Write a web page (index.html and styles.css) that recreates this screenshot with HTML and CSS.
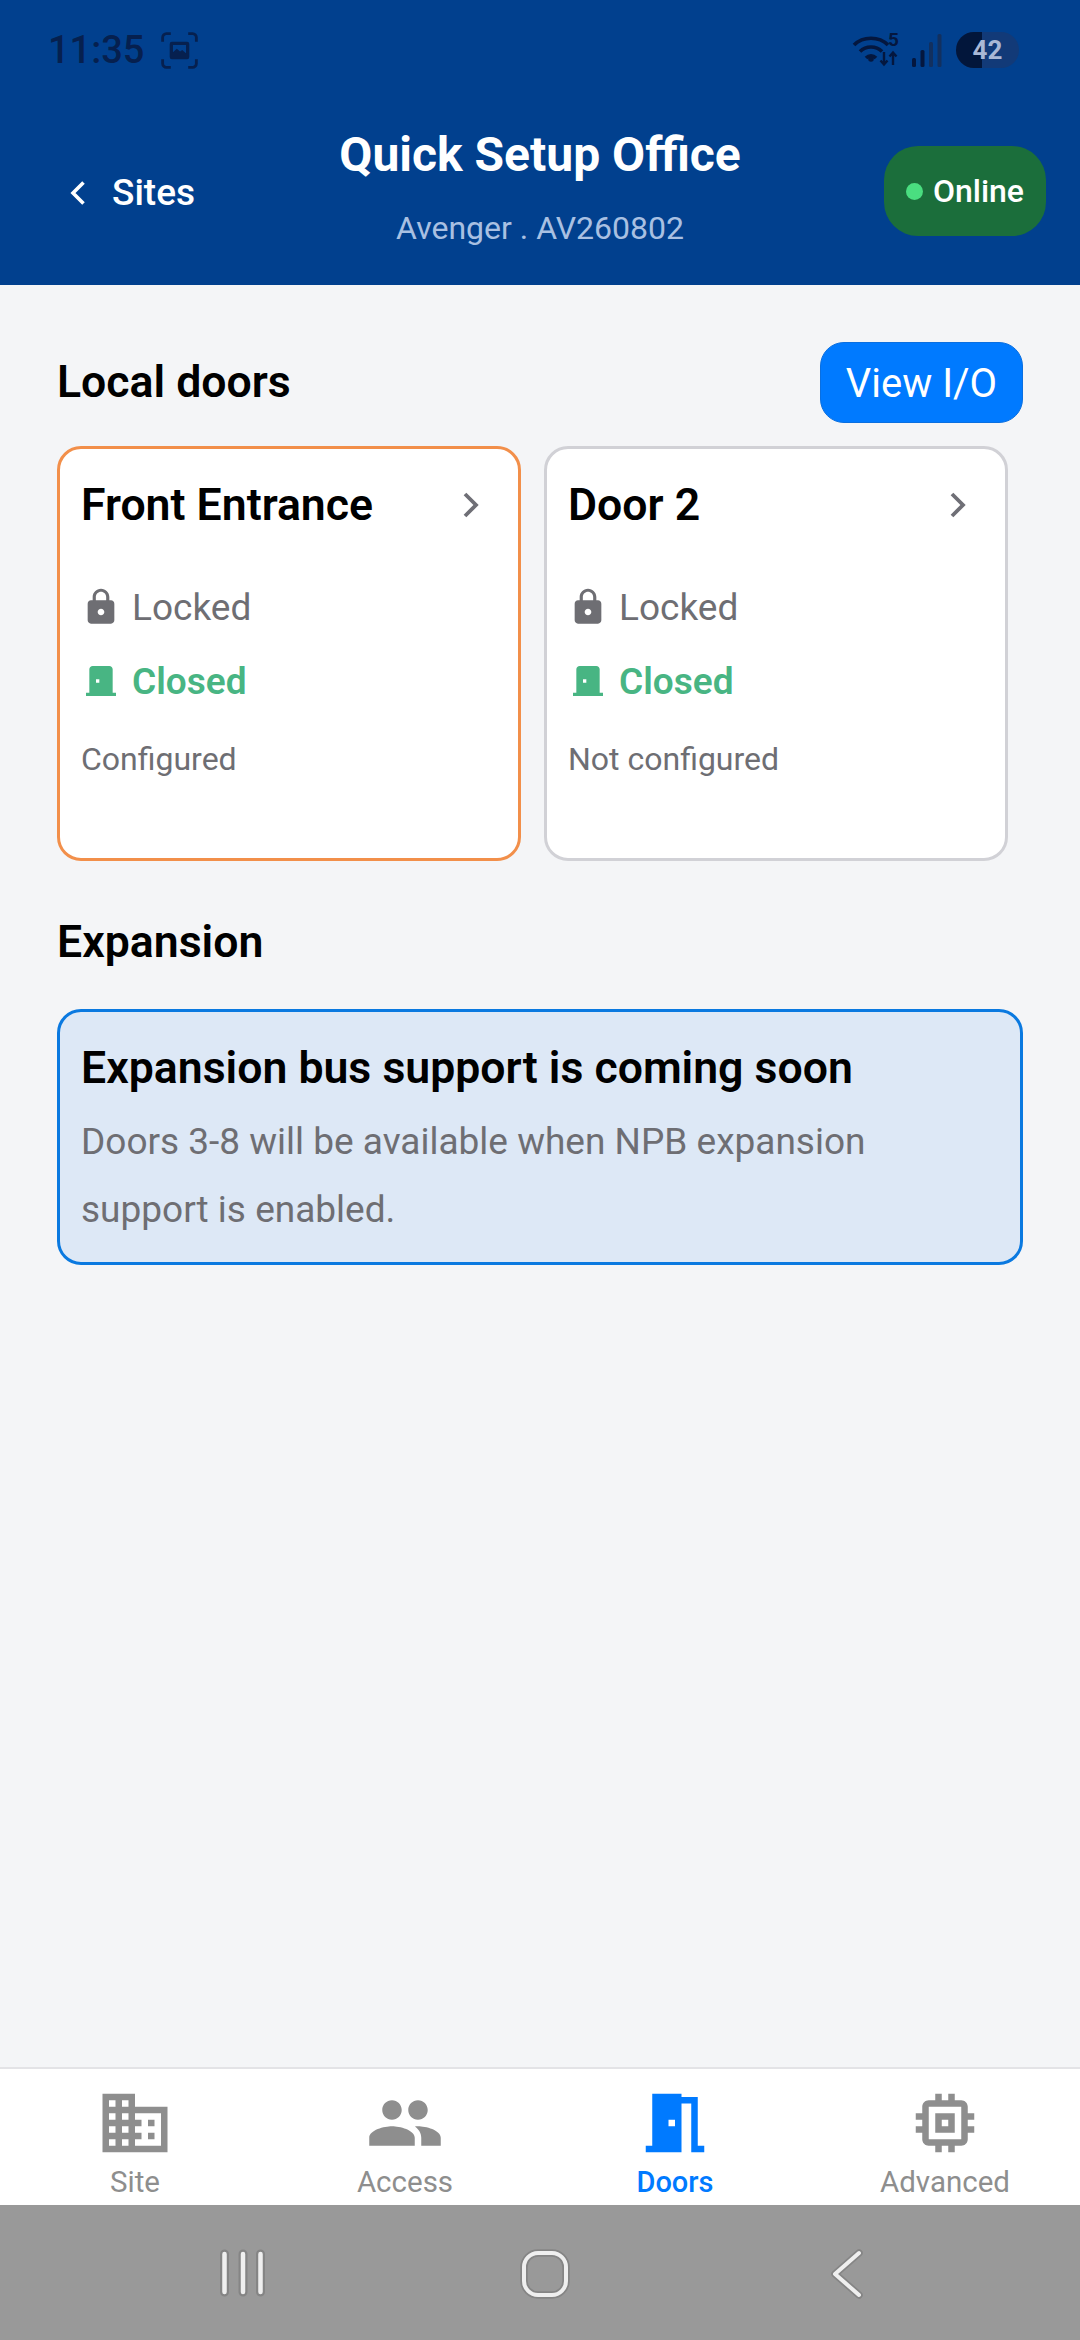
FILE: index.html
```html
<!DOCTYPE html>
<html lang="en">
<head>
    <meta charset="UTF-8">
    <meta name="viewport" content="width=device-width, initial-scale=1.0">
    <title>Quick Setup Office</title>
    <link rel="stylesheet" href="styles.css">
</head>
<body>
<div class="app">

    <!-- Header -->
    <header class="header">
        <div class="status-bar">
            <div class="status-left">
                <span class="clock">11:35</span>
                <svg class="shot-icon" viewBox="0 0 34 34">
                    <path d="M1.5 9V5a3.5 3.5 0 0 1 3.5-3.500h4M25 1.500h4a3.500 3.500 0 0 1 3.500 3.500v4M32.500 25v4a3.500 3.500 0 0 1-3.500 3.500h-4M9 32.500H5A3.500 3.500 0 0 1 1.500 29v-4" fill="none" stroke="#06204f" stroke-width="2.600"/>
                    <path fill-rule="evenodd" d="M10 9h14a2 2 0 0 1 2 2v12a2 2 0 0 1-2 2H10a2 2 0 0 1-2-2V11a2 2 0 0 1 2-2zm1 9.500 3.500-3 3 2.500 2-1.500 3.500 3V12H11z" fill="#06204f"/>
                </svg>
            </div>
            <div class="status-right">
                <svg class="wifi-icon" viewBox="0 -6 48 42">
                    <path d="M2 13C11 4 27 4 36 13M8 19.500c6-6 16-6 22 0M14 26c3-3 7-3 10 0" fill="none" stroke="#04173f" stroke-width="3.600"/>
                    <circle cx="19" cy="27" r="2.800" fill="#04173f"/>
                    <text x="36" y="14" class="wifi-five">5</text>
                    <path d="M32 20v12m-3.500-3.500 3.500 4 3.500-4M41 33V21m-3.500 3.500 3.500-4 3.500 4" fill="none" stroke="#04173f" stroke-width="2.400"/>
                </svg>
                <svg class="signal-icon" viewBox="0 0 30 34">
                    <rect x="0" y="25" width="4" height="9" rx="1.500" fill="#04173f"/>
                    <rect x="8.500" y="17" width="4" height="17" rx="1.500" fill="#04173f"/>
                    <rect x="17" y="9" width="4" height="25" rx="1.500" fill="#12305f"/>
                    <rect x="25.500" y="1" width="4" height="33" rx="1.500" fill="#12305f"/>
                </svg>
                <div class="battery"><span class="battery-fill"></span><span class="battery-text">42</span></div>
            </div>
        </div>
        <div class="header-row">
            <div class="back">
                <svg class="back-icon" viewBox="0 0 16 26"><path d="M13.500 2.500 3 13l10.500 10.500" fill="none" stroke="#fff" stroke-width="3.600"/></svg>
                <span>Sites</span>
            </div>
            <div class="header-title">
                <h1>Quick Setup Office</h1>
                <p>Avenger . AV260802</p>
            </div>
            <div class="online-pill"><span class="online-dot"></span>Online</div>
        </div>
    </header>

    <!-- Main content -->
    <main class="content">
        <div class="section-head">
            <h2>Local doors</h2>
            <button class="io-btn">View I/O</button>
        </div>
        <div class="door-row">
            <div class="door-card door-card-active">
                <div class="door-title">
                    <h3>Front Entrance</h3>
                    <svg class="chev" viewBox="0 0 18 28"><path d="M3 3l11 11L3 25" fill="none" stroke="#6f6f76" stroke-width="3.800"/></svg>
                </div>
                <div class="door-status">
                    <svg class="status-icon" viewBox="0 0 24 24"><path fill="#6e6e73" d="M18 8h-1V6c0-2.760-2.240-5-5-5S7 3.240 7 6v2H6c-1.100 0-2 .9-2 2v10c0 1.100.9 2 2 2h12c1.100 0 2-.9 2-2V10c0-1.100-.9-2-2-2zm-6 9c-1.100 0-2-.9-2-2s.9-2 2-2 2 .9 2 2-.9 2-2 2zm3.100-9H8.900V6c0-1.710 1.390-3.100 3.100-3.100 1.710 0 3.100 1.390 3.100 3.100v2z"/></svg>
                    <span>Locked</span>
                </div>
                <div class="door-status door-closed">
                    <svg class="status-icon" viewBox="0 0 24 24"><path fill="#48b583" d="M19 19V5c0-1.100-.9-2-2-2H7c-1.100 0-2 .9-2 2v14H3v2h18v-2h-2zm-8-6H9v-2h2v2z"/></svg>
                    <span>Closed</span>
                </div>
                <div class="door-note">Configured</div>
            </div>
            <div class="door-card">
                <div class="door-title">
                    <h3>Door 2</h3>
                    <svg class="chev" viewBox="0 0 18 28"><path d="M3 3l11 11L3 25" fill="none" stroke="#6f6f76" stroke-width="3.800"/></svg>
                </div>
                <div class="door-status">
                    <svg class="status-icon" viewBox="0 0 24 24"><path fill="#6e6e73" d="M18 8h-1V6c0-2.760-2.240-5-5-5S7 3.240 7 6v2H6c-1.100 0-2 .9-2 2v10c0 1.100.9 2 2 2h12c1.100 0 2-.9 2-2V10c0-1.100-.9-2-2-2zm-6 9c-1.100 0-2-.9-2-2s.9-2 2-2 2 .9 2 2-.9 2-2 2zm3.100-9H8.900V6c0-1.710 1.390-3.100 3.100-3.100 1.710 0 3.100 1.390 3.100 3.100v2z"/></svg>
                    <span>Locked</span>
                </div>
                <div class="door-status door-closed">
                    <svg class="status-icon" viewBox="0 0 24 24"><path fill="#48b583" d="M19 19V5c0-1.100-.9-2-2-2H7c-1.100 0-2 .9-2 2v14H3v2h18v-2h-2zm-8-6H9v-2h2v2z"/></svg>
                    <span>Closed</span>
                </div>
                <div class="door-note">Not configured</div>
            </div>
        </div>

        <h2 class="expansion-head">Expansion</h2>
        <div class="notice">
            <h3>Expansion bus support is coming soon</h3>
            <p>Doors 3-8 will be available when NPB expansion support is enabled.</p>
        </div>
    </main>

    <!-- Tab bar -->
    <nav class="tabs">
        <div class="tab">
            <svg class="tab-icon" viewBox="0 0 24 24"><path d="M12 7V3H2v18h20V7H12zM6 19H4v-2h2v2zm0-4H4v-2h2v2zm0-4H4V9h2v2zm0-4H4V5h2v2zm4 12H8v-2h2v2zm0-4H8v-2h2v2zm0-4H8V9h2v2zm0-4H8V5h2v2zm10 12h-8v-2h2v-2h-2v-2h2v-2h-2V9h8v10zm-2-8h-2v2h2v-2zm0 4h-2v2h2v-2z"/></svg>
            <span>Site</span>
        </div>
        <div class="tab">
            <svg class="tab-icon" viewBox="0 0 24 24"><path d="M16 11c1.660 0 2.990-1.340 2.990-3S17.660 5 16 5c-1.660 0-3 1.340-3 3s1.340 3 3 3zm-8 0c1.660 0 2.990-1.340 2.990-3S9.660 5 8 5C6.340 5 5 6.340 5 8s1.340 3 3 3zm0 2c-2.330 0-7 1.170-7 3.500V19h14v-2.500c0-2.330-4.670-3.500-7-3.500zm8 0c-.29 0-.62.02-.97.05 1.160.84 1.970 1.970 1.970 3.450V19h6v-2.500c0-2.330-4.670-3.500-7-3.500z"/></svg>
            <span>Access</span>
        </div>
        <div class="tab tab-active">
            <svg class="tab-icon" viewBox="0 0 24 24"><path d="M14 6v15H3v-2h2V3h9v1h5v15h2v2h-4V6h-3zm-4 5v2h2v-2h-2z"/></svg>
            <span>Doors</span>
        </div>
        <div class="tab">
            <svg class="tab-icon" viewBox="0 0 24 24"><path d="M15 9H9v6h6V9zm-2 4h-2v-2h2v2zm8-2V9h-2V7c0-1.100-.9-2-2-2h-2V3h-2v2h-2V3H9v2H7c-1.100 0-2 .9-2 2v2H3v2h2v2H3v2h2v2c0 1.100.9 2 2 2h2v2h2v-2h2v2h2v-2h2c1.100 0 2-.9 2-2v-2h2v-2h-2v-2h2zm-4 6H7V7h10v10z"/></svg>
            <span>Advanced</span>
        </div>
    </nav>

    <!-- System navigation -->
    <div class="sys-nav">
        <svg class="sys-recent" viewBox="0 0 46 48">
            <path d="M4.500 5v38M23 5v38M40.500 5v38" fill="none" stroke="#858585" stroke-width="9" stroke-linecap="round"/>
            <path d="M4.500 5v38M23 5v38M40.500 5v38" fill="none" stroke="#efefef" stroke-width="4.500" stroke-linecap="round"/>
        </svg>
        <svg class="sys-home" viewBox="0 0 50 50">
            <rect x="4" y="4" width="42" height="42" rx="14" fill="none" stroke="#858585" stroke-width="7.500"/>
            <rect x="4" y="4" width="42" height="42" rx="14" fill="none" stroke="#efefef" stroke-width="4"/>
        </svg>
        <svg class="sys-back" viewBox="0 0 34 50">
            <path d="M29 4 5 25l24 21" fill="none" stroke="#858585" stroke-width="7.500" stroke-linecap="round" stroke-linejoin="round"/>
            <path d="M29 4 5 25l24 21" fill="none" stroke="#efefef" stroke-width="4" stroke-linecap="round" stroke-linejoin="round"/>
        </svg>
    </div>

</div>
</body>
</html>
```

FILE: styles.css
```css
/* General Reset */
body {
    margin: 0;
    font-family: Roboto, "Liberation Sans", sans-serif;
    background-color: #F4F5F7;
}
h1, h2, h3, p {
    margin: 0;
}
.app {
    display: flex;
    flex-direction: column;
    width: 1080px;
    height: 2340px;
    overflow: hidden;
}

/* Header */
.header {
    height: 285px;
    flex: none;
    background-color: #01408E;
    color: white;
}
.status-bar {
    display: flex;
    justify-content: space-between;
    align-items: center;
    height: 100px;
    padding: 0 61px 0 48px;
}
.status-left, .status-right {
    display: flex;
    align-items: center;
}
.clock {
    font-size: 38px;
    font-weight: 500;
    color: #06204F;
}
.shot-icon {
    width: 37px;
    height: 37px;
    margin-left: 17px;
}
.wifi-icon {
    width: 48px;
    height: 42px;
    margin-top: -6px;
}
.wifi-five {
    font-size: 19px;
    font-weight: 700;
    fill: #04173F;
}
.signal-icon {
    width: 32px;
    height: 34px;
    margin-left: 11px;
}
.battery {
    position: relative;
    width: 63px;
    height: 36px;
    margin-left: 13px;
    border-radius: 18px;
    overflow: hidden;
    background-color: #123A78;
    text-align: center;
}
.battery-fill {
    position: absolute;
    left: 0;
    top: 0;
    bottom: 0;
    width: 26px;
    background-color: #02163B;
}
.battery-text {
    position: relative;
    font-size: 26px;
    line-height: 36px;
    font-weight: 700;
    color: #A9B8D6;
}
.header-row {
    display: grid;
    grid-template-columns: 1fr auto 1fr;
    align-items: center;
    padding: 27px 34px 0;
}
.back {
    display: flex;
    align-items: center;
    gap: 26px;
    margin: 10px 0 0 36px;
    font-size: 37px;
    font-weight: 500;
}
.back-icon {
    width: 16px;
    height: 26px;
}
.header-title {
    text-align: center;
}
.header-title h1 {
    font-size: 48px;
    line-height: 56px;
    font-weight: 700;
}
.header-title p {
    margin-top: 25px;
    font-size: 32px;
    line-height: 40px;
    color: #A9C0E2;
}
.online-pill {
    justify-self: end;
    display: flex;
    align-items: center;
    gap: 10px;
    height: 90px;
    padding: 0 22px;
    margin-top: 7px;
    border-radius: 34px;
    background-color: #1B6E3B;
    font-size: 32px;
    font-weight: 500;
}
.online-dot {
    width: 17px;
    height: 17px;
    border-radius: 50%;
    background-color: #4ADE80;
}

/* Main content */
.content {
    flex: 1;
    padding: 57px 57px 0;
}
.section-head {
    display: flex;
    justify-content: space-between;
    align-items: center;
    height: 80px;
}
h2 {
    font-size: 44.6px;
    font-weight: 600;
    color: black;
}
.io-btn {
    width: 203px;
    height: 81px;
    padding: 2px 0 0;
    border: 1px solid #0A6FE0;
    border-radius: 24px;
    background-color: #007AFF;
    color: white;
    font-family: inherit;
    font-size: 40px;
}
.door-row {
    display: flex;
    gap: 23px;
    margin-top: 24px;
}
.door-card {
    box-sizing: border-box;
    width: 464px;
    height: 415px;
    padding: 30px 21px 0;
    border: 3px solid #D1D1D6;
    border-radius: 24px;
    background-color: white;
}
.door-card-active {
    border-color: #F28F4A;
}
.door-title {
    display: flex;
    justify-content: space-between;
    align-items: center;
    padding-right: 17px;
}
.door-title h3 {
    font-size: 44.6px;
    line-height: 52px;
    font-weight: 600;
    color: black;
}
.chev {
    width: 18px;
    height: 28px;
}
.door-status {
    display: flex;
    align-items: center;
    gap: 11px;
    height: 48px;
    font-size: 37px;
    color: #6E6E73;
}
.door-title + .door-status {
    margin-top: 52px;
}
.door-closed {
    margin-top: 26px;
    font-weight: 600;
    color: #48B583;
}
.status-icon {
    width: 40px;
    height: 40px;
    flex: none;
}
.door-note {
    margin-top: 34px;
    font-size: 32px;
    line-height: 40px;
    color: #6E6E73;
}
.expansion-head {
    margin-top: 55px;
}
.notice {
    box-sizing: border-box;
    height: 256px;
    margin-top: 41px;
    padding: 30px 21px 0;
    border: 3px solid #0A79E0;
    border-radius: 24px;
    background-color: #DDE8F6;
}
.notice h3 {
    font-size: 44.6px;
    line-height: 52px;
    font-weight: 600;
    color: black;
}
.notice p {
    margin-top: 14px;
    font-size: 37px;
    line-height: 68px;
    color: #6E6E73;
}

/* Tab bar */
.tabs {
    box-sizing: border-box;
    display: grid;
    grid-template-columns: repeat(4, 1fr);
    height: 138px;
    flex: none;
    border-top: 2px solid #E3E3E6;
    background-color: white;
}
.tab {
    display: flex;
    flex-direction: column;
    align-items: center;
    padding-top: 15px;
    font-size: 29.5px;
    color: #8E8E8E;
}
.tab-icon {
    width: 78px;
    height: 78px;
    fill: #8E8E8E;
    margin-bottom: 3px;
}
.tab-active {
    font-size: 29px;
    font-weight: 500;
    color: #007AFF;
}
.tab-active .tab-icon {
    fill: #007AFF;
}

/* System navigation */
.sys-nav {
    position: relative;
    height: 135px;
    flex: none;
    background-color: #999999;
}
.sys-nav svg {
    position: absolute;
    top: 44px;
}
.sys-recent {
    left: 220px;
    width: 46px;
    height: 48px;
}
.sys-home {
    left: 520px;
    width: 50px;
    height: 50px;
}
.sys-back {
    left: 830px;
    width: 34px;
    height: 50px;
}
```
